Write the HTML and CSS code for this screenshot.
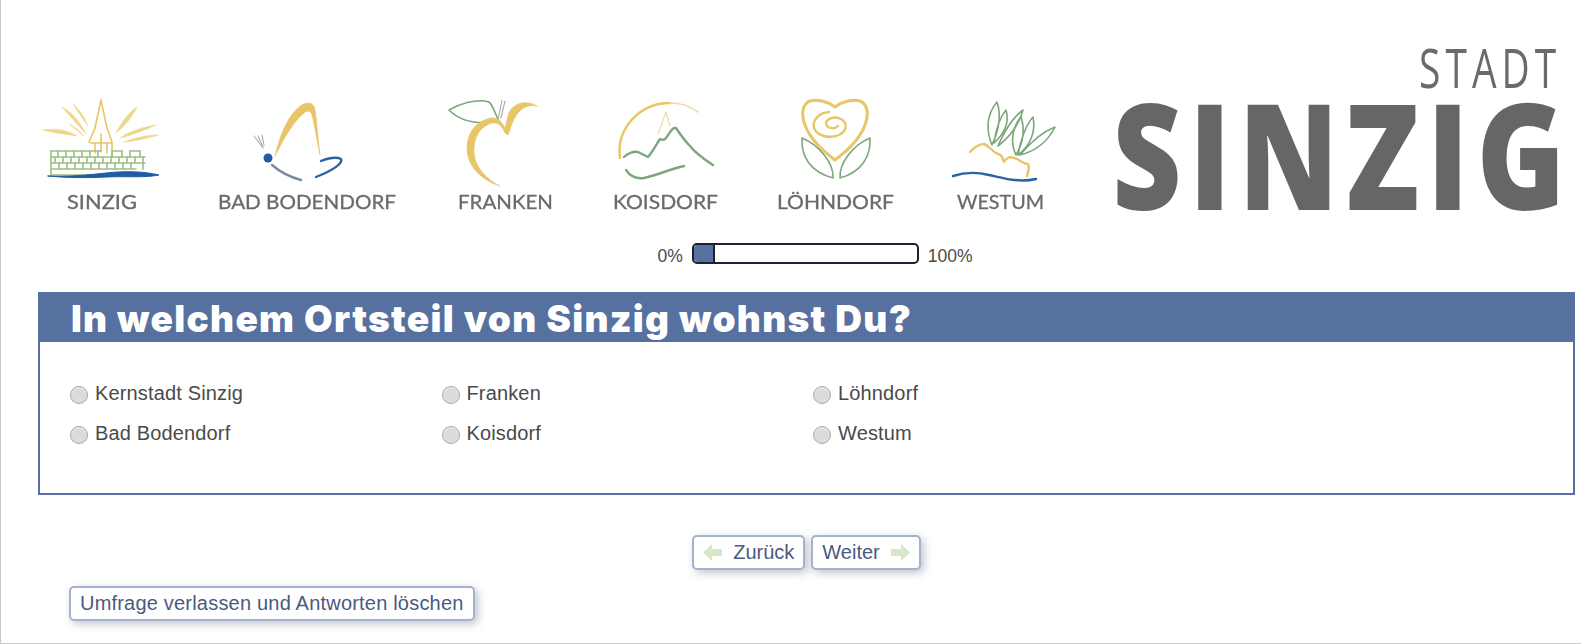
FILE: index.html
```html
<!DOCTYPE html>
<html lang="de">
<head>
    <meta charset="UTF-8">
    <meta name="viewport" content="width=device-width, initial-scale=1.0">
    <title>Umfrage Stadt Sinzig</title>
    <link rel="stylesheet" href="styles.css">
</head>
<body>
    <header class="banner">
        <svg class="banner-img" viewBox="1 0 1580 236" width="1580" height="236">
            <g class="soft">
                <!-- Sinzig -->
                <g class="gold-fill light">
                    <path d="M43 130c12-2 25 0 34 6-12-2-24-3-34-6zM62 107c10 5 18 15 24 27-8-9-16-18-24-27zM73 104c7 6 12 14 15 22-5-7-10-14-15-22zM69 124c6 3 11 7 15 12-5-4-10-8-15-12z"/>
                    <path d="M116 133c5-10 12-20 21-26-5 10-12 19-21 26zM120 138c10-7 22-11 36-13-11 5-23 10-36 13zM124 142c11-4 22-7 35-7-11 3-23 6-35 7z"/>
                </g>
                <g class="gold line">
                    <path d="M101 100l6 28 5 14v15M101 100l-6 28-6 14M90 143h22M95 143v10M101 134v18M107 143v10"/>
                </g>
                <g class="green brick">
                    <path d="M51 151h50M112 151h10M130 151h10M51 157h94M51 163h94M51 169h85M51 175h60"/>
                    <path d="M51 151v23M58 151v6M66 151v6M74 151v6M82 151v6M90 151v6M98 151v6M112 151v6M122 151v6M130 151v6M140 151v6M55 157v6M63 157v6M71 157v6M79 157v6M87 157v6M95 157v6M103 157v6M111 157v6M119 157v6M127 157v6M135 157v6M143 157v12M59 163v6M67 163v6M75 163v6M83 163v6M91 163v6M99 163v6M107 163v6M115 163v6M123 163v6M131 163v6"/>
                </g>
                <path class="blue thick" d="M48 176c20 1 40-1 58-3 18-2 36-2 53 2-16 3-30 1-52 2-20 1-40 1-59-1z"/>
                <text class="place" x="67" y="209" textLength="70" lengthAdjust="spacingAndGlyphs">SINZIG</text>

                <!-- Bad Bodendorf -->
                <path class="gold-fill" d="M275 156c5-22 13-40 24-49 6-5 14-6 16 2 2 14 3 30 5 46-3-14-5-28-8-40-1-4-5-5-8-2-12 10-20 26-29 43z"/>
                <path class="blue wide" d="M321 161c8-3 16-4 20-2 2 4-7 11-25 18"/>
                <path class="slate wide" d="M272 165c8 7 18 12 29 15"/>
                <path class="pale thin" d="M254 136l9 12M258 136l5 11M262 135l2 10"/>
                <circle class="dot" cx="268" cy="158" r="4.5"/>
                <text class="place" x="218" y="209" textLength="178" lengthAdjust="spacingAndGlyphs">BAD BODENDORF</text>

                <!-- Franken -->
                <path class="green line" d="M449 110c10-6 28-12 40-8 4 3 6 12 10 19-16 3-36 3-50-11z"/>
                <path class="pale thin" d="M502 100l-4 20M505 101l-4 17"/>
                <path class="gold-fill" d="M537 106c-10-6-22-4-28 6l-4 16c-3-6-8-11-14-10-16 3-24 16-24 30 0 18 14 32 33 38-16-8-27-22-26-38 1-14 8-22 18-25 6-1 10 3 13 10l3 2c3-8 5-16 10-22 6-7 12-8 19-7z"/>
                <text class="place" x="458" y="209" textLength="95" lengthAdjust="spacingAndGlyphs">FRANKEN</text>

                <!-- Koisdorf -->
                <path class="gold wide" d="M620 158c-4-30 20-55 50-55"/>
                <path class="pale-gold line" d="M670 103c10 0 20 3 28 9"/>
                <path class="pale-gold thin" d="M658 134l8-22 4 14"/>
                <path class="green wide" d="M624 157c4-4 10-6 14-5 4 2 8 4 10 5 4-4 8-12 12-18 4 2 6 0 8-4 3-4 5-8 8-7 4 6 8 12 14 18 6 8 14 13 23 19"/>
                <path class="green wide" d="M626 170c4 6 10 9 18 8 14-3 26-9 40-12"/>
                <text class="place" x="613" y="209" textLength="105" lengthAdjust="spacingAndGlyphs">KOISDORF</text>

                <!-- Loehndorf -->
                <path class="gold wing" d="M835 107c-8-6-18-8-25-6-8 3-9 14-5 24 5 14 18 26 30 35 12-9 25-21 30-35 4-10 3-21-5-24-7-2-17 0-25 6z"/>
                <path class="gold wide" d="M829 112c-10 1-17 8-15 16 3 8 15 11 25 7 8-4 9-12 2-16-6-3-14-1-15 4 0 5 8 7 12 3"/>
                <path class="green line" d="M802 138c-1 18 8 34 31 40 1-15-14-33-31-40z"/>
                <path class="green line" d="M870 138c1 18-8 34-30 40-1-15 13-33 30-40z"/>
                <text class="place" x="777" y="209" textLength="117" lengthAdjust="spacingAndGlyphs">LÖHNDORF</text>

                <!-- Westum -->
                <path class="green line" d="M992 145c-6-14-6-30 5-43 4 12 2 28-5 43zM994 143c2-14 6-26 12-33 3 10 0 22-12 33zM998 146c6-14 14-28 25-36-4 14-12 26-25 36z"/>
                <path class="green line" d="M1016 155c-6-12-4-28 5-38 4 12 2 26-5 38zM1018 155c2-14 8-30 15-38 3 14-2 28-15 38zM1020 155c10-12 22-23 35-28-7 14-19 24-35 28z"/>
                <path class="gold wide" d="M970 152c4-4 8-8 14-8 6 2 8 8 14 10 4 0 4 4 6 8 2-4 6-6 10-4 4 0 8 6 14 6 2 4 0 8-1 12"/>
                <path class="blue wide" d="M953 176c12-4 24-4 36-1 14 3 30 8 47 4"/>
                <text class="place" x="957" y="209" textLength="87" lengthAdjust="spacingAndGlyphs">WESTUM</text>

                <!-- Stadt Sinzig -->
                <text class="stadt" transform="scale(.72 1)" x="1971" y="88">STADT</text>
                <text class="sinzig" transform="scale(.81 1)" x="1373" y="210">SINZIG</text>
            </g>
        </svg>
    </header>

    <div class="progress-row">
        <span>0%</span>
        <div class="progress"><div class="progress-fill"></div></div>
        <span>100%</span>
    </div>

    <main class="content">
        <section class="question">
            <h1 class="question-title">In welchem Ortsteil von Sinzig wohnst Du?</h1>
            <div class="options">
                <label class="option"><input type="radio" name="ort"><span>Kernstadt Sinzig</span></label>
                <label class="option"><input type="radio" name="ort"><span>Franken</span></label>
                <label class="option"><input type="radio" name="ort"><span>Löhndorf</span></label>
                <label class="option"><input type="radio" name="ort"><span>Bad Bodendorf</span></label>
                <label class="option"><input type="radio" name="ort"><span>Koisdorf</span></label>
                <label class="option"><input type="radio" name="ort"><span>Westum</span></label>
            </div>
        </section>

        <nav class="nav">
            <button class="btn btn-back" type="button">
                <svg class="arrow" viewBox="0 0 19 17" width="19" height="17"><path d="M0 8.5L9 0v5h10v7H9v5z"/></svg>
                Zurück
            </button>
            <button class="btn btn-next" type="button">
                Weiter
                <svg class="arrow" viewBox="0 0 19 17" width="19" height="17"><path d="M19 8.5L10 0v5H0v7h10v5z"/></svg>
            </button>
        </nav>

        <button class="btn btn-leave" type="button">Umfrage verlassen und Antworten löschen</button>
    </main>
</body>
</html>
```
FILE: styles.css
```css
* {
    box-sizing: border-box;
}
body {
    margin: 0;
    height: 644px;
    overflow: hidden;
    background: white;
    border-left: 1px solid #c8c8c8;
    border-bottom: 1px solid #c8c8c8;
    font-family: "Liberation Sans", Arial, sans-serif;
    font-size: 17.5px;
    color: #4a4a4a;
}
.banner-img {
    display: block;
}
.soft {
    filter: blur(0.5px);
}
.banner-img path {
    fill: none;
    stroke-linecap: round;
    stroke-linejoin: round;
}
.banner-img .gold { stroke: #e8c566; }
.banner-img .green { stroke: #7ea67c; }
.banner-img .blue { stroke: #2b62a3; }
.banner-img .slate { stroke: #7c8a9c; }
.banner-img .pale { stroke: #a9b3b3; }
.banner-img .pale-gold { stroke: #f0d9a8; }
.banner-img .thin { stroke-width: 1.2; }
.banner-img .line { stroke-width: 1.6; }
.banner-img .wide { stroke-width: 2.4; }
.banner-img .wing { stroke-width: 3; }
.banner-img .brick { stroke: #9dc088; stroke-width: 1.6; }
.banner-img .thick { fill: #1f5ca3; stroke: #1f5ca3; stroke-width: 1; }
.banner-img .gold-fill,
.banner-img .gold-fill path { fill: #e8c566; stroke: #e8c566; stroke-width: 0.6; }
.banner-img .light path { fill: #f0d68a; stroke: #f0d68a; }
.dot { fill: #1f5ca3; }
.place {
    font-family: Lato, sans-serif;
    font-size: 20px;
    fill: #6a6a6a;
    stroke: #6a6a6a;
    stroke-width: 0.3;
}
.stadt {
    font-family: "Open Sans", sans-serif;
    font-size: 54px;
    letter-spacing: 7px;
    fill: #6a6a6a;
}
.sinzig {
    font-family: "Open Sans", sans-serif;
    font-weight: 800;
    font-size: 148px;
    letter-spacing: 9.5px;
    fill: #666;
}
.progress-row {
    display: flex;
    align-items: center;
    justify-content: center;
    gap: 9px;
    height: 28px;
    margin-top: 6px;
    padding-left: 48px;
}
.progress {
    width: 227px;
    height: 21px;
    margin-bottom: 6px;
    border: 2px solid #1a2233;
    border-radius: 5px;
    background: white;
    overflow: hidden;
}
.progress-fill {
    width: 21px;
    height: 100%;
    background: #5670a0;
    border-right: 2px solid #1a2233;
}
.content {
    margin: 22px 6px 0 37px;
}
.question-title {
    margin: 0;
    height: 50px;
    padding-left: 33px;
    background: #5670a0;
    color: white;
    font-family: Inter, "Liberation Sans", sans-serif;
    font-size: 37px;
    line-height: 53px;
    font-weight: 900;
    letter-spacing: 1.3px;
}
.options {
    display: grid;
    grid-template-columns: repeat(3, 371.5px);
    grid-auto-rows: 40px;
    height: 153px;
    padding: 31px 30px 0;
    border: 2px solid #5670a5;
    border-top: none;
}
.option {
    display: flex;
    align-items: center;
    gap: 7px;
    font-size: 20px;
    letter-spacing: 0.15px;
}
.option input {
    appearance: none;
    flex: none;
    width: 18px;
    height: 18px;
    margin: 3px 0 0;
    border: 1px solid #a8a8a8;
    border-radius: 50%;
    background: #dcdcdc;
    box-shadow: inset 0 1px 1px #f2f2f2;
}
.nav {
    display: flex;
    justify-content: center;
    gap: 6px;
    margin-top: 40px;
}
.btn {
    display: inline-flex;
    align-items: center;
    height: 35px;
    padding: 0 9px;
    border: 2px solid #a4b2d0;
    border-radius: 5px;
    background: white;
    color: #4a5a80;
    font-family: inherit;
    font-size: 20px;
    box-shadow: 3px 3px 8px rgba(80, 90, 120, 0.35);
}
.btn-back {
    gap: 11px;
}
.btn-next {
    gap: 11px;
}
.arrow {
    fill: #d5e8c8;
}
.btn-leave {
    margin: 16px 0 0 31px;
    letter-spacing: 0.2px;
}
```
